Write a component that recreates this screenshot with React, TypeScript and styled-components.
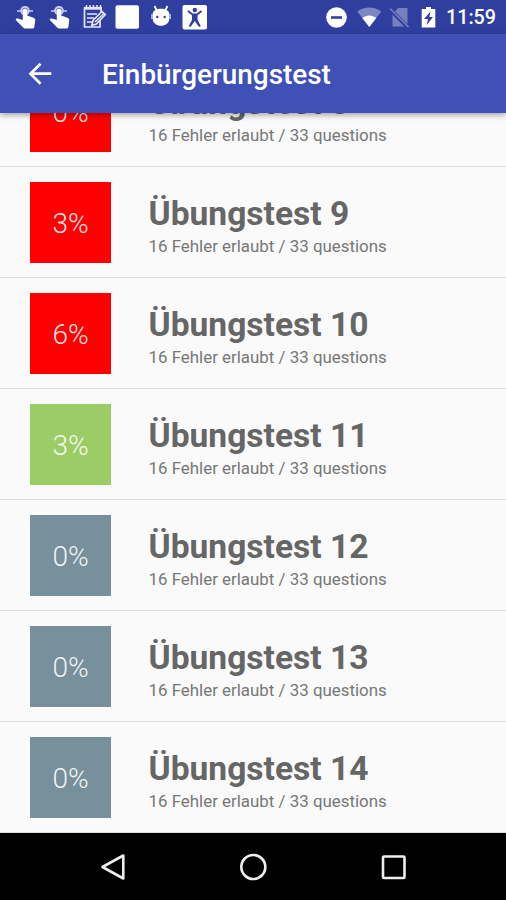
import React from 'react';
import styled, { createGlobalStyle } from 'styled-components';

const GlobalStyle = createGlobalStyle`
  * { box-sizing: border-box; }
  body { margin: 0; font-family: Roboto, "Liberation Sans", sans-serif; background: #000; }
`;

const Screen = styled.div`
  width: 506px;
  height: 900px;
  display: flex;
  flex-direction: column;
  overflow: hidden;
  background: #fafafa;
`;

const StatusBar = styled.div`
  flex: none;
  height: 34px;
  display: flex;
  align-items: center;
  justify-content: space-between;
  padding: 0 10px 0 9px;
  background: #303f9f;
`;

const IconGroup = styled.div`
  display: flex;
  align-items: center;
`;

const Icon = styled.svg<{ $w: number }>`
  display: block;
  flex: none;
  width: ${(p) => p.$w}px;
  height: 34px;
`;

const Clock = styled.span`
  width: 50px;
  padding-top: 2px;
  font-size: 19.7px;
  font-weight: 500;
  line-height: 34px;
  color: #fff;
  white-space: nowrap;
`;

const AppBar = styled.header`
  flex: none;
  height: 79px;
  display: flex;
  align-items: center;
  padding-left: 23px;
  background: #3f51b5;
  box-shadow: 0 2px 6px rgba(0, 0, 0, 0.36);
  z-index: 1;
`;

const BackButton = styled.button`
  width: 34px;
  height: 34px;
  margin: 0 45px 0 0;
  padding: 0;
  border: 0;
  background: none;
`;

const Title = styled.h1`
  margin: 0;
  padding-top: 2px;
  font-size: 27.9px;
  font-weight: 500;
  line-height: 34px;
  color: #fff;
`;

const List = styled.main`
  flex: 1;
  min-height: 0;
  display: flex;
  flex-direction: column;
  justify-content: flex-end;
  overflow: hidden;
`;

const Row = styled.article`
  flex: none;
  height: 111px;
  display: flex;
  align-items: flex-start;
  padding: 15px 0 0 30px;
  border-bottom: 1px solid #dcdcdc;
`;

const Score = styled.div<{ $color: string }>`
  width: 81px;
  height: 81px;
  display: flex;
  align-items: center;
  justify-content: center;
  padding-top: 2px;
  background: ${(p) => p.$color};
  color: rgba(255, 255, 255, 0.92);
  font-size: 28px;
  font-weight: 300;
`;

const Labels = styled.div`
  padding: 12px 0 0 37.5px;
  white-space: nowrap;
`;

const TestName = styled.h2`
  margin: 0;
  font-size: 33.6px;
  font-weight: 700;
  line-height: 40px;
  color: #666;
`;

const Details = styled.p`
  margin: 2px 0 0;
  font-size: 16.9px;
  font-weight: 400;
  line-height: 20px;
  color: #777;
`;

const NavBar = styled.nav`
  flex: none;
  height: 67px;
  display: flex;
  align-items: center;
  justify-content: center;
  gap: 106px;
  background: #000;
`;

const tests = [
  { n: 8, score: 0, color: '#ff0000' },
  { n: 9, score: 3, color: '#ff0000' },
  { n: 10, score: 6, color: '#ff0000' },
  { n: 11, score: 3, color: '#9ccc65' },
  { n: 12, score: 0, color: '#78909c' },
  { n: 13, score: 0, color: '#78909c' },
  { n: 14, score: 0, color: '#78909c' },
];

const TouchIcon = () => (
  <Icon $w={34} viewBox="0 0 34 34">
    <circle cx="16" cy="10.7" r="3.8" fill="none" stroke="#c9cdea" strokeWidth="2" />
    <path d="M8 11h16" stroke="#c9cdea" strokeWidth="1.5" />
    <path fill="#fff" d="M13.8 10.500c0-2.800 4.400-2.800 4.400 0v5l6.200 2.200c1.300.5 1.900 1.200 1.800 2.500l-.8 6.300c-.2 1.500-.8 2.100-2.200 2.100h-6.700c-1 0-1.600-.3-2.300-1L7 20.300c-.5-.8-.2-1.500.8-1.800 1-.3 1.900 0 2.800.4l3.200 1z" />
  </Icon>
);

const NotepadIcon = () => (
  <Icon $w={34} viewBox="0 0 34 34" fill="none" stroke="#e3e5f5" strokeWidth="1.7">
    <path d="M23 20v7H7.500V8H24v4" />
    <path d="M7 8.300h18" strokeWidth="2.800" />
    <path d="M9.500 5v4M13 5v4M16.500 5v4M20 5v4M23.500 5v4" strokeWidth="1.500" />
    <path d="M10 14h10M10 18h7M10 22h5" />
    <path d="M16 20.500l9-9 3.300 3-9 9.500-4.500 1.500z" fill="#303f9f" />
    <path d="M18 22l9-8.500" strokeWidth="1.500" />
  </Icon>
);

const BlankIcon = () => (
  <Icon $w={34} viewBox="0 0 34 34">
    <rect x="4.500" y="5.300" width="23.500" height="23.500" rx="2" fill="#fff" />
  </Icon>
);

const AndroidIcon = () => (
  <Icon $w={34} viewBox="0 0 34 34">
    <path d="M9.500 6l2.500 5M22.500 6l-2.500 5" stroke="#fff" strokeWidth="1.700" />
    <path fill="#fff" d="M7.800 13.500c0-6.500 16.400-6.500 16.400 0v5.500c0 9-16.400 9-16.400 0z" />
    <path d="M7 14v5M25 14v5" stroke="#c9cdea" strokeWidth="1.500" />
    <circle cx="12.300" cy="17" r="1.200" fill="#303f9f" />
    <circle cx="19.700" cy="17" r="1.200" fill="#303f9f" />
  </Icon>
);

const AccessibilityIcon = () => (
  <Icon $w={34} viewBox="0 0 34 34">
    <rect x="3.500" y="5" width="24.500" height="24.500" rx="2" fill="#fff" />
    <circle cx="15.800" cy="10" r="2.200" fill="#303f9f" />
    <path d="M9 11l4.500 3.500h4.600l4.500-3.500" fill="none" stroke="#303f9f" strokeWidth="1.900" />
    <path d="M13 14h5.600v6l3.200 6-1.700 1-4.300-6-4.300 6-1.700-1 3.200-6z" fill="#303f9f" />
  </Icon>
);

export default function App() {
  return (
    <>
      <GlobalStyle />
      <Screen>
        <StatusBar>
          <IconGroup>
            <TouchIcon />
            <TouchIcon />
            <NotepadIcon />
            <BlankIcon />
            <AndroidIcon />
            <AccessibilityIcon />
          </IconGroup>
          <IconGroup>
            <Icon $w={31} viewBox="0 0 31 34">
              <circle cx="14.500" cy="17.500" r="10.300" fill="#fff" />
              <path d="M9 17.500h11" stroke="#303f9f" strokeWidth="2.600" />
            </Icon>
            <Icon $w={31} viewBox="-1 0 31 34">
              <path fill="#7c86c3" d="M3.300 11.500C10.500 6 20 6 27.300 11.500L15.300 27z" />
              <path fill="#fff" d="M8.300 18c4.200-3.400 9.800-3.400 14 0l-7 9z" />
            </Icon>
            <Icon $w={31} viewBox="-1 0 31 34">
              <path fill="#7680be" d="M7.500 14L13 8h9.500v18.500h-15z" />
              <path d="M5.300 9.500L23 27.500" stroke="#303f9f" strokeWidth="4" />
              <path d="M5 8.500L23.500 27" stroke="#7680be" strokeWidth="1.700" />
            </Icon>
            <Icon $w={31} viewBox="-1 0 31 34">
              <path fill="#fff" d="M10 7h5v2h4.300v18.500H5.700V9H10z" />
              <path fill="#303f9f" d="M14.500 11.500L8 19h4l-1.300 6L17 17h-3.700z" />
            </Icon>
            <Clock>11:59</Clock>
          </IconGroup>
        </StatusBar>
        <AppBar>
          <BackButton aria-label="Back">
            <Icon $w={34} viewBox="0 0 34 34" fill="none" stroke="#fff" strokeWidth="2.700">
              <path d="M28.300 16.700H8M17.500 6.700l-10 10 10 10" />
            </Icon>
          </BackButton>
          <Title>Einbürgerungstest</Title>
        </AppBar>
        <List>
          {tests.map((t) => (
            <Row key={t.n}>
              <Score $color={t.color}>{t.score}%</Score>
              <Labels>
                <TestName>Übungstest {t.n}</TestName>
                <Details>16 Fehler erlaubt / 33 questions</Details>
              </Labels>
            </Row>
          ))}
        </List>
        <NavBar>
          <Icon $w={34} viewBox="0 0 34 34" fill="none" stroke="#eee" strokeWidth="2.600">
            <path d="M27.300 5.500v23L6.500 17z" strokeLinejoin="round" />
          </Icon>
          <Icon $w={34} viewBox="0 0 34 34" fill="none" stroke="#eee" strokeWidth="2.600">
            <circle cx="17.300" cy="17" r="12" />
          </Icon>
          <Icon $w={34} viewBox="0 0 34 34" fill="none" stroke="#eee" strokeWidth="2.600">
            <rect x="7" y="6.500" width="21.500" height="21.500" rx="1" />
          </Icon>
        </NavBar>
      </Screen>
    </>
  );
}
